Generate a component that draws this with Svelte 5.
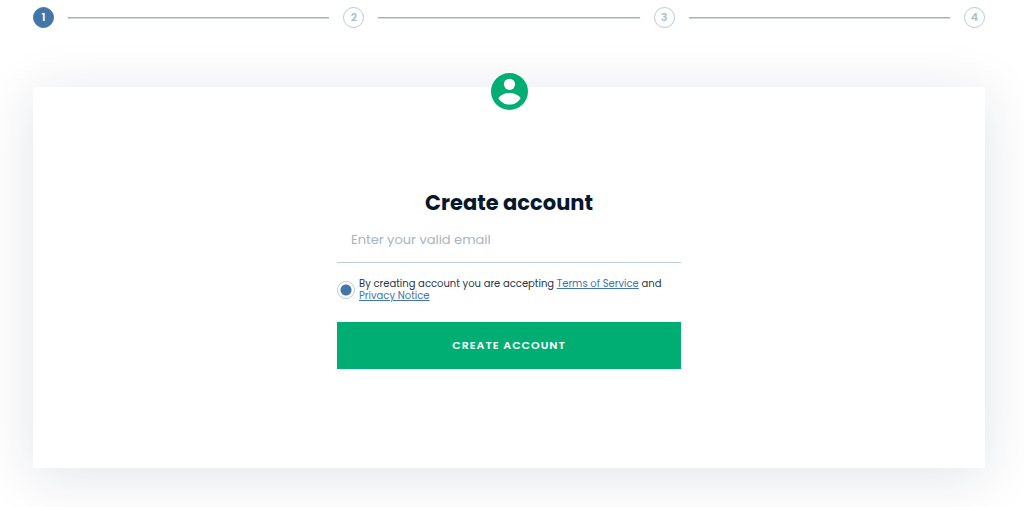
<script>
  const steps = [1, 2, 3, 4];
  let current = $state(1);
  let email = $state('');
  let accepted = $state('yes');
</script>

<main>
  <ol class="steps" aria-label="Progress">
    {#each steps as step}
      {#if step > 1}<li class="line" aria-hidden="true"></li>{/if}
      <li class="step" class:active={step === current}>{step}</li>
    {/each}
  </ol>

  <section class="card">
    <svg class="avatar" viewBox="0 0 37 37" aria-hidden="true">
      <circle cx="18.500" cy="18.500" r="18.500" fill="#00ae73" />
      <circle cx="18.500" cy="11.300" r="5.600" fill="#fff" />
      <path fill="#fff" d="M7.400 25.200C9.200 22 14 20 18.500 20s9.300 2 11.100 5.200C27.400 29 23.200 31.600 18.500 31.600S9.600 29 7.400 25.200z" />
    </svg>
    <form onsubmit={(e) => e.preventDefault()}>
      <h1>Create account</h1>
      <input class="email" type="email" placeholder="Enter your valid email" aria-label="Enter your valid email" bind:value={email} />
      <div class="terms">
        <input id="accept" type="radio" name="accept" value="yes" bind:group={accepted} />
        <label for="accept">By creating account you are accepting <a href="#terms">Terms of Service</a> and <a href="#privacy">Privacy Notice</a></label>
      </div>
      <button type="submit">CREATE ACCOUNT</button>
    </form>
  </section>
</main>

<style>
  :global(body) {
    margin: 0;
    background: #fff;
    overflow-x: hidden;
  }
  main {
    box-sizing: border-box;
    padding: 7px 39px 39px 33px;
    font-family: Poppins, "Open Sans", sans-serif;
    color: #06182c;
  }
  .steps {
    display: flex;
    align-items: center;
    gap: 14px;
    margin: 0 0 59px;
    padding: 0;
    list-style: none;
  }
  .step {
    box-sizing: border-box;
    width: 21px;
    height: 21px;
    border: 1px solid #b9c8d8;
    border-radius: 50%;
    color: #adbdcc;
    font-size: 11px;
    font-weight: 600;
    line-height: 19px;
    text-align: center;
  }
  .step.active {
    border-color: #4275a8;
    background: #4275a8;
    color: #fff;
  }
  .line {
    box-sizing: border-box;
    flex: 1;
    height: 2px;
    border-bottom: 1px solid #d0dae4;
    background: #9fb2c6;
  }
  .card {
    position: relative;
    padding: 101px 24px 99px;
    background: #fff;
    box-shadow: 0 8px 54px rgba(20, 35, 70, 0.12);
  }
  .avatar {
    position: absolute;
    top: -14px;
    left: 50%;
    width: 37px;
    height: 37px;
    margin-left: -18px;
  }
  form {
    display: flex;
    flex-direction: column;
    max-width: 344px;
    margin: 0 auto;
  }
  h1 {
    margin: 0;
    font-size: 21px;
    font-weight: 700;
    line-height: 30px;
    text-align: center;
  }
  .email {
    height: 44px;
    padding: 0 14px;
    border: 0;
    border-bottom: 1px solid #bccada;
    background: transparent;
    color: #06182c;
    font: 400 13px Poppins, "Open Sans", sans-serif;
    outline: none;
  }
  .email::placeholder {
    color: #a7b4c2;
  }
  .terms {
    display: flex;
    align-items: center;
    gap: 4px;
    margin: 15px 0 20px;
    font-size: 10px;
    line-height: 12px;
  }
  .terms label {
    color: #26364a;
  }
  .terms input {
    appearance: none;
    flex: none;
    box-sizing: border-box;
    width: 18px;
    height: 18px;
    margin: 0;
    border: 1px solid #bccada;
    border-radius: 50%;
  }
  .terms input:checked {
    background: radial-gradient(circle, #4275a8 5px, transparent 6px);
  }
  a {
    color: #4275a8;
  }
  button {
    height: 47px;
    border: 0;
    background: #00ae73;
    color: #fff;
    font: 600 11px Poppins, "Open Sans", sans-serif;
    letter-spacing: 1px;
    cursor: pointer;
  }
</style>
